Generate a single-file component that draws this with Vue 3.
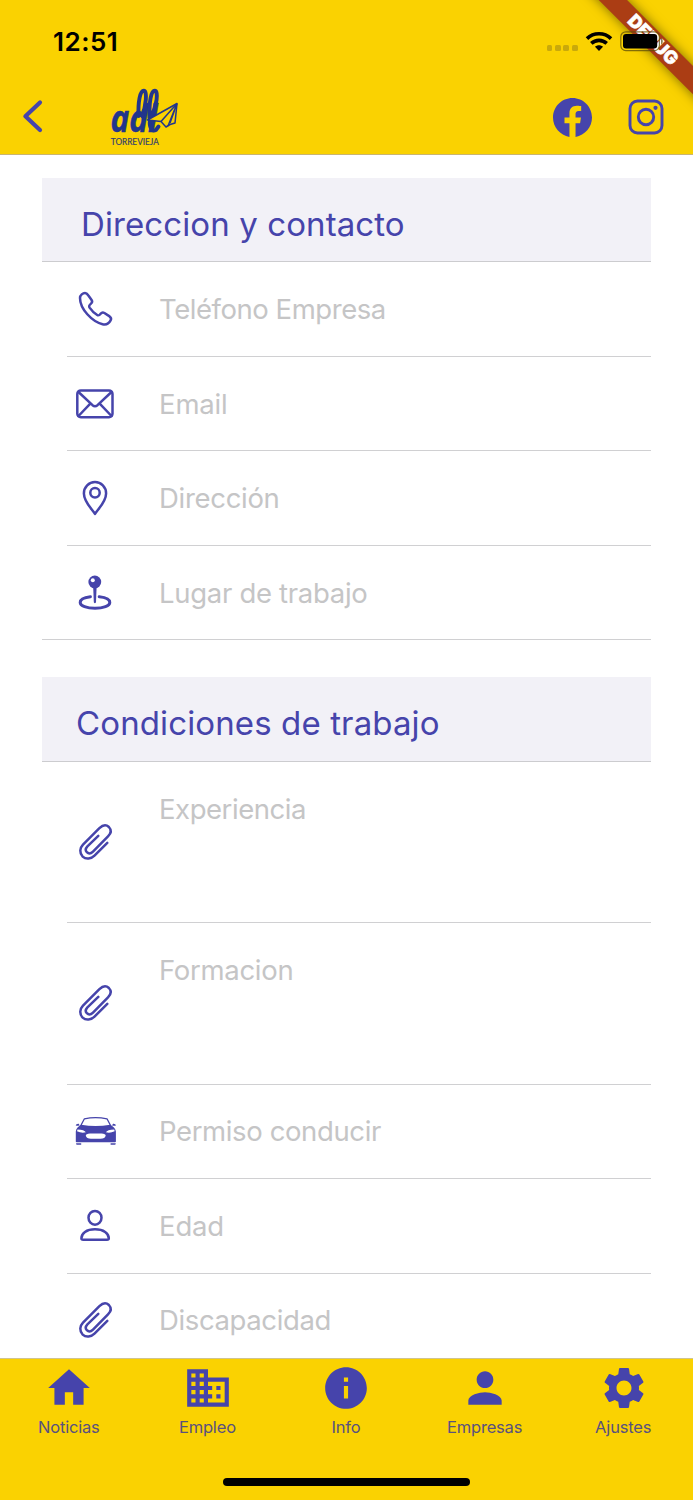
<script setup>
const sections = [
  {
    title: 'Direccion y contacto', cls: 'contact',
    rows: [
      { label: 'Teléfono Empresa', icon: 'phone', cls: 'tight' },
      { label: 'Email', icon: 'mail', cls: 'loose' },
      { label: 'Dirección', icon: 'pin', cls: 'mid' },
      { label: 'Lugar de trabajo', icon: 'place', cls: 'mid' },
    ],
  },
  {
    title: 'Condiciones de trabajo', cls: 'work',
    rows: [
      { label: 'Experiencia', icon: 'clip', tall: true, cls: 'tight' },
      { label: 'Formacion', icon: 'clip', tall: true, cls: 'mid' },
      { label: 'Permiso conducir', icon: 'car', cls: 'snug' },
      { label: 'Edad', icon: 'person', cls: 'loose' },
      { label: 'Discapacidad', icon: 'clip', cls: 'snug' },
    ],
  },
]
const tabs = [
  { label: 'Noticias', d: 'M10 20v-6h4v6h5v-8h3L12 3 2 12h3v8z' },
  { label: 'Empleo', d: 'M12 7V3H2v18h20V7H12zM6 19H4v-2h2v2zm0-4H4v-2h2v2zm0-4H4V9h2v2zm0-4H4V5h2v2zm4 12H8v-2h2v2zm0-4H8v-2h2v2zm0-4H8V9h2v2zm0-4H8V5h2v2zm10 12h-8v-2h2v-2h-2v-2h2v-2h-2V9h8v10zm-2-8h-2v2h2v-2zm0 4h-2v2h2v-2z' },
  { label: 'Info', d: 'M12 2C6.48 2 2 6.48 2 12s4.48 10 10 10 10-4.48 10-10S17.52 2 12 2zm1 15h-2v-6h2v6zm0-8h-2V7h2v2z' },
  { label: 'Empresas', d: 'M12 12c2.21 0 4-1.79 4-4s-1.79-4-4-4-4 1.79-4 4 1.79 4 4 4zm0 2c-2.67 0-8 1.34-8 4v2h16v-2c0-2.66-5.33-4-8-4z' },
  { label: 'Ajustes', d: 'M19.14 12.94c.04-.3.06-.61.06-.94 0-.32-.02-.64-.07-.94l2.03-1.58c.18-.14.23-.41.12-.61l-1.92-3.32c-.12-.22-.37-.29-.59-.22l-2.39.96c-.5-.38-1.03-.7-1.62-.94l-.36-2.54c-.04-.24-.24-.41-.48-.41h-3.84c-.24 0-.43.17-.47.41l-.36 2.54c-.59.24-1.13.57-1.62.94l-2.39-.96c-.22-.08-.47 0-.59.22L2.74 8.87c-.12.21-.08.47.12.61l2.03 1.58c-.05.3-.09.63-.09.94s.02.64.07.94l-2.03 1.58c-.18.14-.23.41-.12.61l1.92 3.32c.12.22.37.29.59.22l2.39-.96c.5.38 1.03.7 1.62.94l.36 2.54c.05.24.24.41.48.41h3.84c.24 0 .44-.17.47-.41l.36-2.54c.59-.24 1.13-.56 1.62-.94l2.39.96c.22.08.47 0 .59-.22l1.92-3.32c.12-.22.07-.47-.12-.61l-2.01-1.58zM12 15.6c-1.98 0-3.6-1.62-3.6-3.6s1.62-3.6 3.6-3.6 3.6 1.62 3.6 3.6-1.62 3.6-3.6 3.6z' },
]
</script>

<template>
  <div class="screen">
    <header class="top">
      <div class="status">
        <span class="time">12:51</span>
        <div class="signals">
          <span class="dots"><i v-for="n in 4" :key="n"></i></span>
          <svg class="wifi" width="28" height="20" viewBox="0 0 28 20">
            <g fill="none" stroke="#000" stroke-width="3.6">
              <path d="M2 7.600C8.500 1.200 19.500 1.200 26 7.600" />
              <path d="M6.300 12.400C10.700 8.300 17.300 8.300 21.700 12.400" />
            </g>
            <path d="M14 20l-4-4.200c2.300-2 5.700-2 8 0z" />
          </svg>
          <svg class="battery" width="44" height="21" viewBox="0 0 44 21">
            <rect x=".8" y=".8" width="38.600" height="18.800" rx="5" fill="none" stroke="#5c4c08" stroke-opacity=".75" stroke-width="1.200" />
            <rect x="3" y="3" width="34.200" height="14.400" rx="3" />
            <path d="M41 7c2.400 1 2.400 5.600 0 6.600z" fill="#5c4c08" fill-opacity=".7" />
          </svg>
        </div>
      </div>
      <div class="nav">
        <svg class="back" width="24" height="36" viewBox="0 0 24 36"><path d="M19 4.500L4.400 18.300 19 32" /></svg>
        <svg class="logo" width="72" height="62" viewBox="0 0 72 62">
          <g class="word">
            <text x="2.500" y="45.500" textLength="47" lengthAdjust="spacingAndGlyphs">adl</text>
          </g>
          <g class="loops">
            <path d="M30.500 30C30 16 32 4.800 35.800 4.800C39.600 4.800 38 20 34 30" />
            <path d="M41.500 32C41 16 43 4.800 46.800 4.800C50.600 4.800 49 20 43 31M42 34C41 41 43.500 46 48 44L50.500 40.500" />
          </g>
          <g class="plane">
            <path d="M39.500 34L69 17.500 67 37 62 38.500 58 41 53 35.500z" />
            <path d="M69 17.500L53 35.500M69 17.500L60 40M69 17.500L62 37" />
          </g>
          <text class="town" x="2.800" y="59.300" textLength="48" lengthAdjust="spacingAndGlyphs">TORREVIEJA</text>
        </svg>
        <svg class="fb" width="39" height="39" viewBox="0 0 24 24"><path d="M24 12.073c0-6.627-5.373-12-12-12s-12 5.373-12 12c0 5.990 4.388 10.954 10.125 11.854v-8.385H7.078v-3.470h3.047V9.430c0-3.007 1.792-4.669 4.533-4.669 1.312 0 2.686.235 2.686.235v2.953H15.830c-1.491 0-1.956.925-1.956 1.874v2.250h3.328l-.532 3.470h-2.796v8.385C19.612 23.027 24 18.062 24 12.073z" /></svg>
        <svg class="ig" width="36" height="36" viewBox="0 0 36 36">
          <rect x="2" y="2" width="32" height="32" rx="7.500" />
          <circle cx="18" cy="18" r="7.700" />
          <circle class="dot" cx="27.500" cy="8.800" r="2.100" />
        </svg>
      </div>
      <div class="ribbon"><span>DEBUG</span></div>
    </header>

    <main class="content">
      <section v-for="s in sections" :key="s.title" class="section">
        <h2 :class="s.cls"><span>{{ s.title }}</span></h2>
        <div v-for="r in s.rows" :key="r.label" class="row" :class="{ tall: r.tall }">
          <svg class="ico" width="42" height="42" viewBox="0 0 42 42">
            <path v-if="r.icon === 'phone'" d="M6 10C6 7 9 5 11 5C12.500 5 13.400 6 14.200 7.200L17.600 12C18.600 13.500 18.200 14.600 17 15.600C15 17.200 14.600 18 15.600 19.600C17.600 22.600 20.600 25.400 23.200 27C24.800 28 25.400 27.400 26.800 25.600C27.800 24.400 29 24.200 30.400 25L35.600 28.400C37.200 29.600 37.400 31 36.600 32.400C35 35.400 32 37 28.600 36.200C18 33.600 6 21 6 10Z" />
            <g v-else-if="r.icon === 'mail'">
              <rect x="3.300" y="7.400" width="35.200" height="26.800" rx="3.500" />
              <path d="M4.500 9L18.500 22.200Q21 24.200 23.500 22.200L37.500 9M4.500 33L16.300 20.600M37.500 33L25.700 20.600" />
            </g>
            <g v-else-if="r.icon === 'pin'">
              <path d="M21 37C18.500 32.500 9.900 25 9.900 16.400A11.100 11.300 0 0 1 32.100 16.400C32.100 25 23.500 32.500 21 37Z" />
              <circle cx="21" cy="15.700" r="4.700" />
            </g>
            <g v-else-if="r.icon === 'place'">
              <path class="solid" d="M19.200 15h3.400l-.6 15.200q-1.100 2.200-2.200 0z" />
              <circle class="solid" cx="20.800" cy="10" r="6.400" />
              <circle class="shine" cx="18.800" cy="8.200" r="2" />
              <path class="thick" d="M16.400 24.700C10 25.400 6.200 27.600 6.200 30.400C6.200 33.800 12.800 36.200 21 36.200S35.800 33.800 35.800 30.400C35.800 27.600 32 25.400 25.200 24.700" />
            </g>
            <path v-else-if="r.icon === 'clip'" d="M33.300 21.800L20.500 34.600C17 38 12 38.700 8.700 35.600C5.200 32 5.700 27 9 23.600L25.400 7.200C28.700 3.900 32.200 3.400 34.900 6C37.500 8.800 37 12.400 34 15.400L19 30.600C17 32.600 14.500 32.900 12.800 31.200C11.200 29.600 11.600 27.400 13.400 25.400L24.300 14.900" />
            <g v-else-if="r.icon === 'car'">
              <path class="thin" d="M6.600 16L10.400 8.800Q21.500 6.400 33 8.800L36.800 16" />
              <path class="solid" fill-rule="evenodd" d="M7.200 14.800Q21.500 17.400 36.200 14.800Q41.300 17.500 41.900 21.500V31.500Q41.900 32.300 41 32.300H2.600Q1.800 32.300 1.800 31.500V21.500Q2.200 17.500 7.200 14.800ZM3.500 19.500L3 21.300Q7.500 23.400 11.800 22.300Q10.500 19.700 3.500 19.500ZM40.200 19.500L40.700 21.300Q36.200 23.400 31.900 22.300Q33.200 19.700 40.200 19.500ZM16 23.400Q11.800 23.800 11.800 25.500Q12.500 28.700 17 28.700H26.500Q31 28.700 31.700 25.500Q31.700 23.800 27.500 23.400Z" />
              <path class="solid" d="M2 33.200h5.200v1.600H2.500zM36.600 33.200h5.200l-.5 1.600h-4.700zM1.700 15.500q.4-2 3-1.700l1 1.800q-2 .3-4-.1zM42 15.500q-.4-2-3-1.700l-1 1.800q2 .3 4-.1z" />
            </g>
            <g v-else>
              <ellipse cx="21" cy="12.800" rx="6.500" ry="6.900" />
              <path d="M7.400 33.300C7.400 28.300 12.400 24.300 21 24.300S34.800 28.300 34.800 33.300Q34.800 34.800 33 34.800H9.200Q7.400 34.800 7.400 33.300Z" />
            </g>
          </svg>
          <span class="label" :class="r.cls">{{ r.label }}</span>
        </div>
      </section>
    </main>

    <nav class="tabs">
      <div v-for="t in tabs" :key="t.label" class="tab">
        <svg width="50" height="50" viewBox="0 0 24 24"><path :d="t.d" /></svg>
        <span>{{ t.label }}</span>
      </div>
      <div class="homebar"></div>
    </nav>
  </div>
</template>

<style>
body { background: #fff; }
</style>

<style scoped>
* { box-sizing: border-box; }
.screen { width: 693px; height: 1500px; overflow: hidden; display: flex; flex-direction: column; background: #fff; font-family: Inter, "Liberation Sans", sans-serif; color: #4644ab; }
.top { position: relative; flex: none; height: 155px; background: #fad201; border-bottom: 1px solid #c9b573; overflow: hidden; }
.status { position: relative; z-index: 2; display: flex; justify-content: space-between; height: 80px; padding: 0 29px 0 53px; align-items: flex-start; }
.time { margin-top: 26px; font-size: 26px; line-height: 32px; font-weight: 600; color: #000; letter-spacing: .5px; }
.signals { display: flex; margin-top: 31px; }
.dots { display: flex; gap: 2.700px; margin: 14px 7px 0 0; }
.dots i { width: 5.700px; height: 5.700px; border-radius: 1.500px; background: #c9a90b; }
.battery { margin-left: 7.500px; }
.nav { display: flex; align-items: flex-start; }
.back { margin: 18px 0 0 21px; }
.back path { fill: none; stroke: #4644ab; stroke-width: 4.200; stroke-linecap: round; stroke-linejoin: round; }
.logo { margin: 6px 0 0 63px; }
.word text { font: italic 700 37px "Open Sans", sans-serif; fill: #22358c; stroke: #22358c; stroke-width: .5; }
.loops path { fill: none; stroke: #22358c; stroke-width: 3.900; stroke-linecap: round; }
.plane path { fill: none; stroke: #22358c; stroke-width: 1.500; stroke-linejoin: round; }
.plane path:first-child { fill: #fad201; }
.town { font: 9.500px Lato, sans-serif; fill: #33406f; stroke: #33406f; stroke-width: .2; }
.fb { margin: 18px 0 0 373px; fill: #4644ab; }
.ig { margin: 19px 0 0 36px; fill: none; stroke: #4644ab; stroke-width: 2.900; }
.ig .dot { fill: #4644ab; stroke: none; }
.ribbon { position: absolute; z-index: 1; left: 552.500px; top: 30.200px; width: 200px; height: 19.600px; background: #ab3d14; transform: rotate(45deg); box-shadow: 0 0 12px rgba(0, 0, 0, .5); display: flex; align-items: center; justify-content: center; }
.ribbon span { font-size: 18px; font-weight: 900; line-height: 19px; color: #fff; -webkit-text-stroke: .5px #fff; }
.content { flex: 1; min-height: 0; overflow: hidden; padding: 23px 42px 0; }
.section { margin-bottom: 37px; }
h2 { margin: 0; height: 84.300px; background: #f2f1f7; border-bottom: 1px solid #cccccf; font-weight: 400; font-size: 33px; line-height: 40px; padding-top: 26px; white-space: nowrap; }
.contact { padding-left: 39px; letter-spacing: .1px; }
.work { padding-left: 34px; letter-spacing: .12px; }
.row { height: 94.500px; margin-left: 25px; border-bottom: 1px solid #d0d0d2; display: flex; align-items: center; }
.row.tall { height: 161.500px; }
.section:first-child .row:last-child { margin-left: 0; padding-left: 25px; }
.ico { flex: none; margin-left: 7px; overflow: visible; fill: none; stroke: #4644ab; stroke-width: 2.500; stroke-linecap: round; stroke-linejoin: round; }
.ico .solid { fill: #4644ab; stroke: none; }
.ico .shine { fill: #fff; stroke: none; }
.ico .thick { stroke-width: 3; }
.ico .thin { stroke-width: 1.300; }
.label { margin-left: 43px; font-size: 27.500px; line-height: 36px; font-weight: 400; color: #c5c5c6; white-space: nowrap; }
.tight { letter-spacing: -.45px; }
.snug { letter-spacing: -.38px; }
.mid { letter-spacing: -.3px; }
.loose { letter-spacing: -.15px; }
.tall .label { align-self: flex-start; margin-top: 29px; }
.tabs { position: relative; flex: none; height: 142px; background: #fad201; border-top: 1px solid #d0c48f; display: grid; grid-template-columns: repeat(5, 1fr); }
.tab { display: flex; flex-direction: column; align-items: center; padding-top: 4px; }
.tab svg { fill: #4644ab; }
.tab span { font-size: 16.500px; line-height: 22px; margin-top: 3px; color: #59517f; letter-spacing: -.18px; margin-right: 1px; }
.homebar { position: absolute; left: 223px; bottom: 14px; width: 247px; height: 8px; border-radius: 4px; background: #000; }
</style>
